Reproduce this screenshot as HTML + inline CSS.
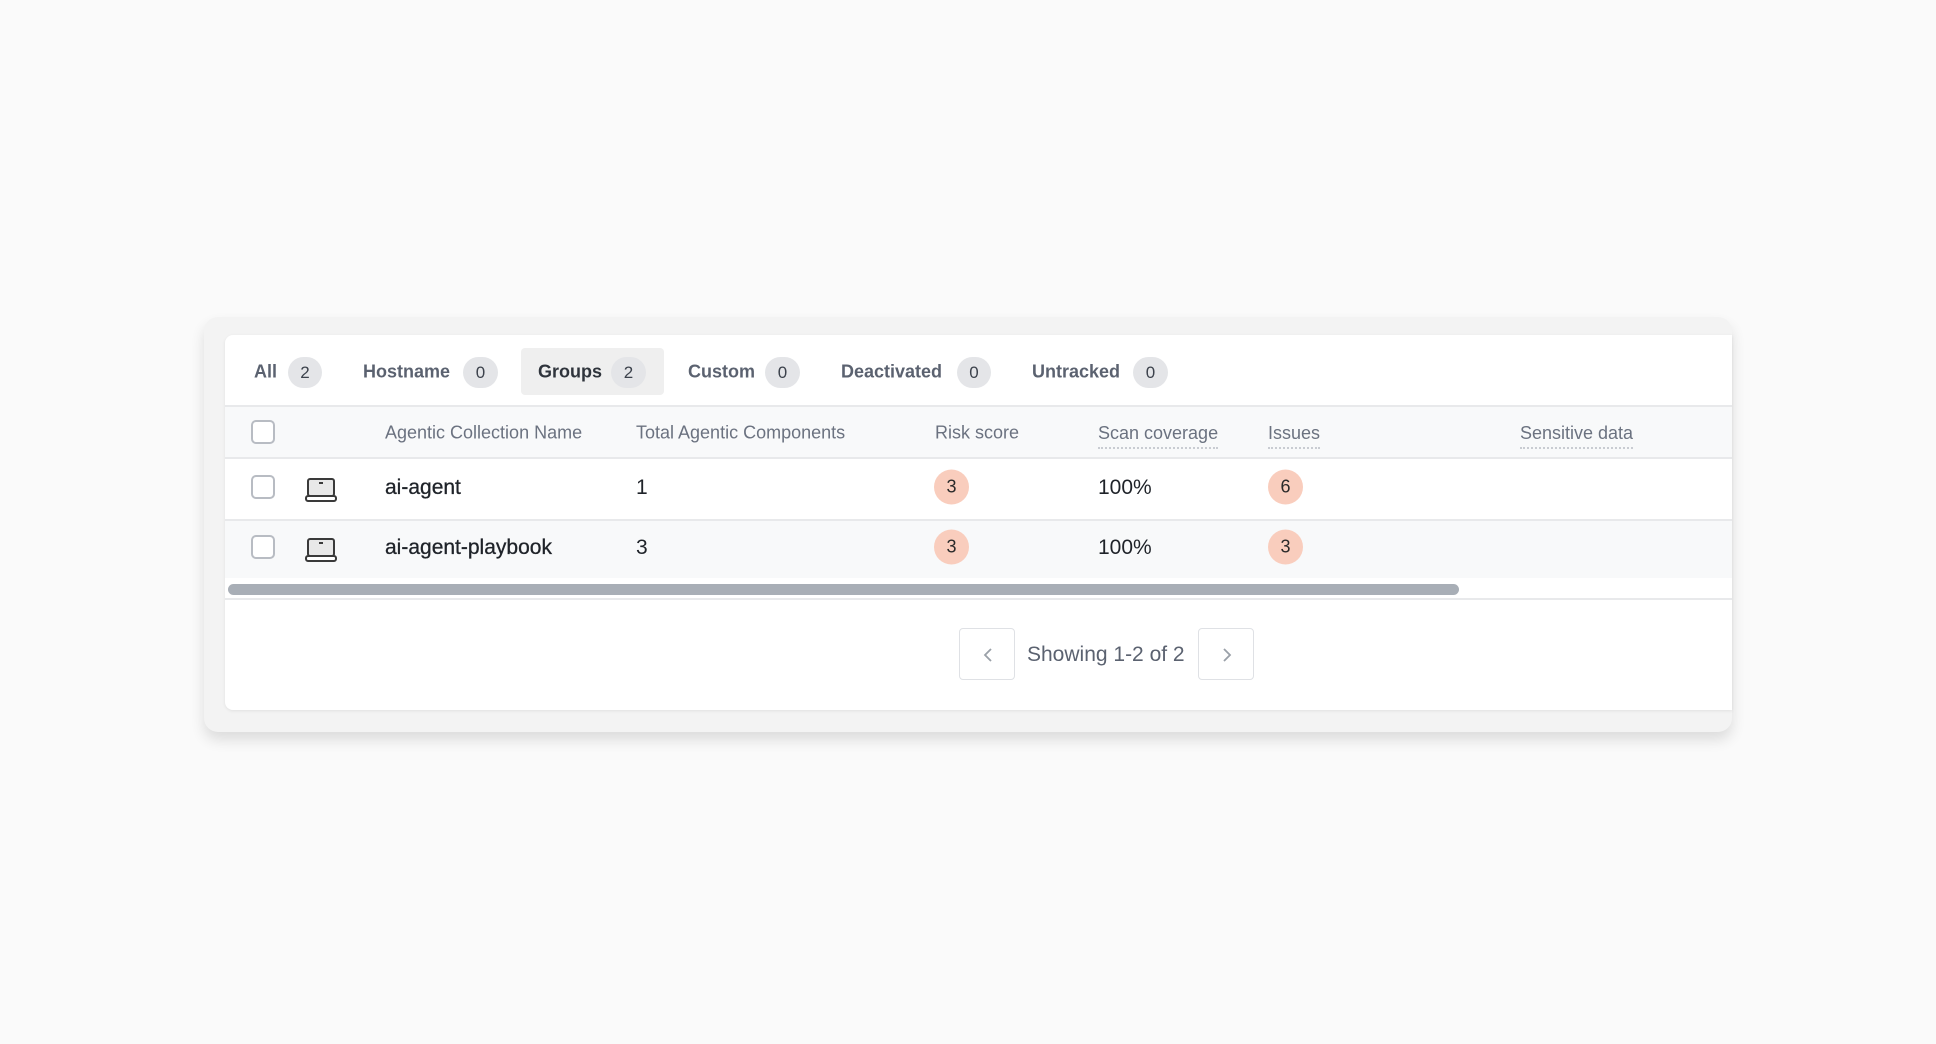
<!DOCTYPE html>
<html><head><style>
*{box-sizing:border-box;margin:0;padding:0}
body{width:1936px;height:1044px;background:#fafafa;font-family:"Liberation Sans",sans-serif;position:relative;overflow:hidden}
.outer{position:absolute;left:204px;top:317px;width:1528px;height:415px;background:#f3f3f3;border-radius:14px;box-shadow:0 8px 14px rgba(0,0,0,.12)}
.card{position:absolute;left:225px;top:335px;width:1507px;height:375px;background:#fff;border-radius:8px 0 0 8px;box-shadow:0 1px 3px rgba(0,0,0,.08);overflow:hidden}
.a{position:absolute}
.tab{position:absolute;top:372px;transform:translateY(-50%);font-size:18px;font-weight:bold;color:#5b6270}
.badge{position:absolute;top:357px;height:31px;border-radius:16px;background:#e4e5e8;font-size:17px;color:#3c424c;text-align:center;line-height:31px}
.hdr{position:absolute;top:433px;transform:translateY(-50%);font-size:18px;color:#6b7280}
.dot{border-bottom:2px dotted #c9ccd2;padding-bottom:3px;top:436px}
.cell{position:absolute;transform:translateY(-50%);font-size:21px;color:#1f2329}
.nm{font-weight:500;-webkit-text-stroke:0.3px #1f2329}
.cb{position:absolute;left:251px;width:24px;height:24px;border:2px solid #b8bcc3;border-radius:5px;background:#fff}
.pill{position:absolute;width:35px;height:35px;border-radius:50%;background:#f9cdbd;text-align:center;line-height:35px;font-size:18px;color:#2a2a2a;transform:translateY(-50%)}
.btn{position:absolute;top:628px;width:56px;height:52px;border:1px solid #dfe1e5;border-radius:4px;background:#fff}
</style></head><body>
<div class="outer"></div>
<div class="card"></div>
<div class="a" style="left:521px;top:348px;width:143px;height:47px;background:#efefef;border-radius:4px"></div>
<div class="tab" style="left:254px">All</div><div class="badge" style="left:288px;width:34px">2</div>
<div class="tab" style="left:363px">Hostname</div><div class="badge" style="left:463px;width:35px">0</div>
<div class="tab" style="left:538px;color:#2f343c">Groups</div><div class="badge" style="left:611px;width:35px">2</div>
<div class="tab" style="left:688px">Custom</div><div class="badge" style="left:765px;width:35px">0</div>
<div class="tab" style="left:841px">Deactivated</div><div class="badge" style="left:957px;width:34px">0</div>
<div class="tab" style="left:1032px">Untracked</div><div class="badge" style="left:1133px;width:35px">0</div>
<div class="a" style="left:225px;top:405px;width:1507px;height:54px;background:#f8f9fa;border-top:2px solid #e8e9eb;border-bottom:2px solid #e8e9eb"></div>
<div class="cb" style="top:420px"></div>
<div class="hdr" style="left:385px">Agentic Collection Name</div>
<div class="hdr" style="left:636px">Total Agentic Components</div>
<div class="hdr" style="left:935px">Risk score</div>
<div class="hdr dot" style="left:1098px">Scan coverage</div>
<div class="hdr dot" style="left:1268px">Issues</div>
<div class="hdr dot" style="left:1520px">Sensitive data</div>
<div class="a" style="left:225px;top:519px;width:1507px;height:59px;background:#f8f9fa;border-top:2px solid #e8e9eb"></div>
<div class="cb" style="top:475px"></div>
<div class="cb" style="top:535px"></div>
<svg class="a" style="left:305px;top:477px" width="32" height="26" viewBox="0 0 32 26"><rect x="3" y="2" width="26" height="17" rx="2" fill="#e8e8e8" stroke="#3a3a3a" stroke-width="2"/><rect x="14" y="5" width="4" height="2" fill="#3a3a3a"/><rect x="1" y="19" width="30" height="5" rx="2" fill="#fff" stroke="#3a3a3a" stroke-width="2"/></svg>
<svg class="a" style="left:305px;top:537px" width="32" height="26" viewBox="0 0 32 26"><rect x="3" y="2" width="26" height="17" rx="2" fill="#e8e8e8" stroke="#3a3a3a" stroke-width="2"/><rect x="14" y="5" width="4" height="2" fill="#3a3a3a"/><rect x="1" y="19" width="30" height="5" rx="2" fill="#fff" stroke="#3a3a3a" stroke-width="2"/></svg>
<div class="cell nm" style="left:385px;top:488px">ai-agent</div>
<div class="cell" style="left:636px;top:488px">1</div>
<div class="pill" style="left:934px;top:487px">3</div>
<div class="cell" style="left:1098px;top:488px">100%</div>
<div class="pill" style="left:1268px;top:487px">6</div>
<div class="cell nm" style="left:385px;top:548px">ai-agent-playbook</div>
<div class="cell" style="left:636px;top:548px">3</div>
<div class="pill" style="left:934px;top:547px">3</div>
<div class="cell" style="left:1098px;top:548px">100%</div>
<div class="pill" style="left:1268px;top:547px">3</div>
<div class="a" style="left:228px;top:584px;width:1231px;height:11px;background:#a8aeb6;border-radius:6px"></div>
<div class="a" style="left:225px;top:598px;width:1507px;height:2px;background:#e8e9eb"></div>
<div class="btn" style="left:959px"><svg width="56" height="52" viewBox="0 0 56 52"><path d="M31 20l-6 6 6 6" fill="none" stroke="#9aa0a8" stroke-width="1.8"/></svg></div>
<div class="a" style="left:1027px;top:655px;transform:translateY(-50%);font-size:21px;color:#5b6270">Showing 1-2 of 2</div>
<div class="btn" style="left:1198px"><svg width="56" height="52" viewBox="0 0 56 52"><path d="M25 20l6 6-6 6" fill="none" stroke="#9aa0a8" stroke-width="1.8"/></svg></div>
</body></html>
